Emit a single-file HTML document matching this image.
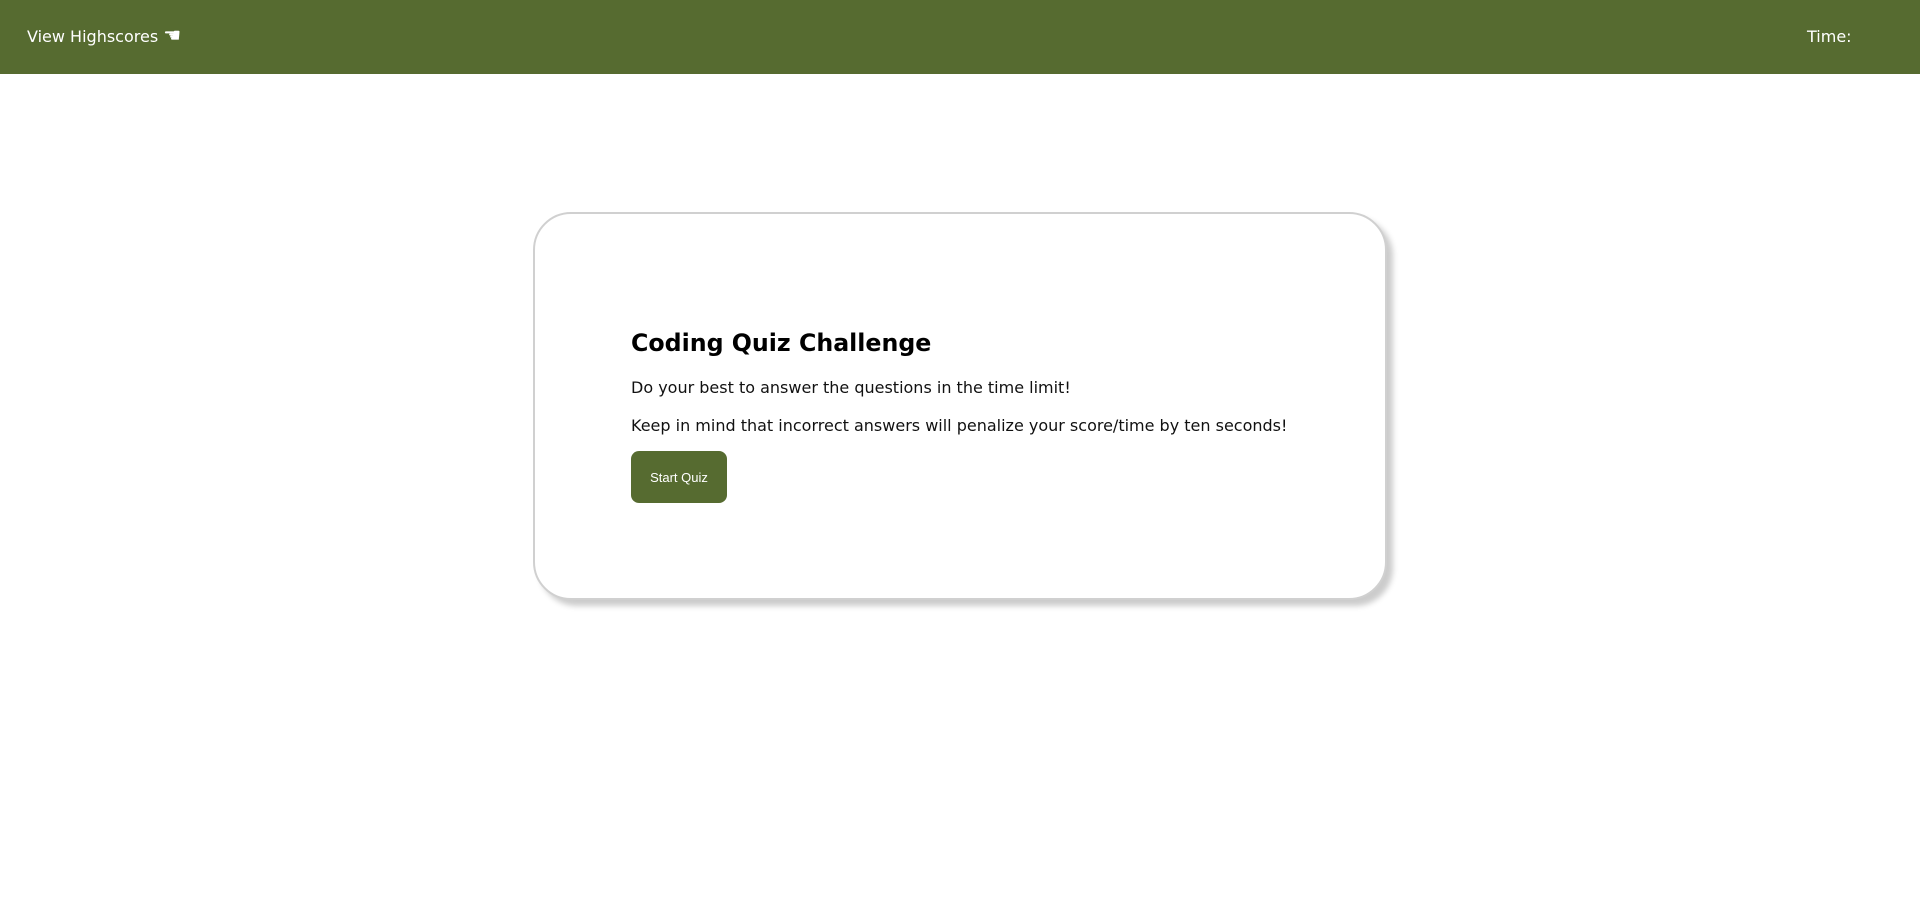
<!DOCTYPE html>
<html><head><style>
body{margin:0;width:1920px;height:912px;background:#fff;font-family:"DejaVu Sans",Verdana,sans-serif;position:relative;overflow:hidden}
.hdr{position:absolute;left:0;top:0;width:1920px;height:74px;background:#566b30;color:#fff;font-size:16px}
.hdr .l{position:absolute;left:27px;top:27px}
.hdr .r{position:absolute;left:1807px;top:27px}
.card{position:absolute;left:533px;top:212px;width:850px;height:384px;border:2px solid #d0d0d0;border-radius:38px;box-shadow:6px 6px 6px #ccc;background:#fff}
h1{position:absolute;left:96px;top:115px;margin:0;font-size:23.7px;font-weight:bold;color:#000}
p{position:absolute;left:96px;margin:0;font-size:16px;color:#111}
.btn{position:absolute;left:96px;top:237px;width:96px;height:52px;background:#566b30;border-radius:8px;color:#fff;font-family:"Liberation Sans",Arial,sans-serif;font-size:13px;display:flex;align-items:center;justify-content:center}
</style></head><body>
<div class="hdr"><span class="l">View Highscores <span style="font-size:20px;line-height:16px">☚</span></span><span class="r">Time:</span></div>
<div class="card">
<h1>Coding Quiz Challenge</h1>
<p style="top:164px">Do your best to answer the questions in the time limit!</p>
<p style="top:202px">Keep in mind that incorrect answers will penalize your score/time by ten seconds!</p>
<div class="btn">Start Quiz</div>
</div>
</body></html>
